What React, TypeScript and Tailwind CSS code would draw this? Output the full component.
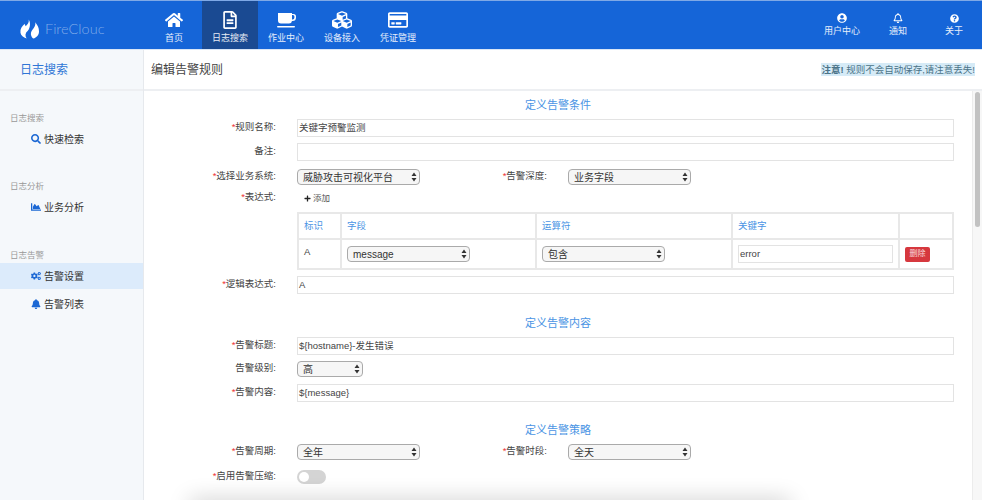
import type { ReactNode } from "react";
import {
  FaBell,
  FaChartArea,
  FaCogs,
  FaCubes,
  FaHome,
  FaPlus,
  FaQuestionCircle,
  FaRegBell,
  FaRegCreditCard,
  FaRegFileAlt,
  FaSearch,
  FaUserCircle,
} from "react-icons/fa";

function Logo() {
  return (
    <svg width="19" height="20" viewBox="0 0 20 20" fill="#fff">
      <path d="M9 0C10 3 8 5 6 7 5.500 6 5 5.500 5 4.500 2 7 0 10 .5 14 1 17 3.500 19 7 20 5 17 5.500 14 8 12 9.500 10.500 10.500 8 10.500 5 10.500 3 10 1 9 0z" />
      <path d="M16 3C16.500 5 16 7 14.500 9 13 11 11 13 11.500 16 12 18 13 19.500 14 20 17.500 19 20 16 20 12.500 20 9 18.500 6 16 3z" />
    </svg>
  );
}

function CupIcon() {
  return (
    <svg width="19" height="17" viewBox="0 0 19 17" fill="#fff">
      <path d="M1 1h14v1h1.500A2.500 2.500 0 0 1 19 4.500v1A3.500 3.500 0 0 1 15.500 9H15a3 3 0 0 1-3 2.500H4A3 3 0 0 1 1 8.500z" />
      <path d="M15 3v4.500h.6A1.800 1.800 0 0 0 17.400 5.700V4.500A1.500 1.500 0 0 0 15.900 3z" fill="#1565d8" />
      <rect x="0" y="14" width="18" height="1.600" rx=".8" />
    </svg>
  );
}

function NavItem({ icon, label, active }: { icon: ReactNode; label: string; active?: boolean }) {
  return (
    <div className={`flex w-[56px] flex-col items-center pt-[9px] ${active ? "bg-[#1a4a92]" : ""}`}>
      <div className="flex h-[20px] items-center text-white">{icon}</div>
      <div className="mt-[1px] text-[9px] leading-[14px] text-white/90">{label}</div>
    </div>
  );
}

function RightItem({ icon, label }: { icon: ReactNode; label: string }) {
  return (
    <div className="flex w-[56px] flex-col items-center pt-[11px]">
      <div className="flex h-[12px] items-center text-white">{icon}</div>
      <div className="text-[9px] leading-[14px] text-white/90">{label}</div>
    </div>
  );
}

function SideGroup({ title, children, mt }: { title: string; children: ReactNode; mt: string }) {
  return (
    <div className={mt}>
      <div className="pl-[10px] text-[8.500px] leading-[12px] text-[#999]">{title}</div>
      {children}
    </div>
  );
}

function SideItem({ icon, label, active }: { icon: ReactNode; label: string; active?: boolean }) {
  return (
    <div className={`mt-[2px] flex h-[26px] items-center gap-[3px] pl-[31px] ${active ? "bg-[#dcebfb]" : ""}`}>
      <span className="flex w-[10px] justify-center text-[#1c68d4]">{icon}</span>
      <span className="text-[10px] text-[#333]">{label}</span>
    </div>
  );
}

function Label({ text, required, w = "w-[132px]" }: { text: string; required?: boolean; w?: string }) {
  return (
    <div className={`shrink-0 pb-[2px] text-right text-[9.500px] leading-[12px] text-[#444] ${w}`}>
      {required && <span className="text-[#e33]">*</span>}
      {text}:
    </div>
  );
}

function Input({ value, className = "w-full" }: { value?: string; className?: string }) {
  return (
    <div className={`flex h-[18px] items-center border border-[#e3e3e3] bg-white pl-[1px] text-[9.500px] text-[#444] ${className}`}>
      {value}
    </div>
  );
}

function Select({ value, w }: { value: string; w: string }) {
  return (
    <div className={`flex h-[16px] items-center justify-between rounded-[4px] border border-[#aaa] bg-[#f6f6f6] pl-[5px] pr-[2px] text-[10px] text-[#333] ${w}`}>
      <span>{value}</span>
      <svg width="6" height="10" viewBox="0 0 6 10" fill="#333">
        <path d="M3 0.500 5.500 4H.5zM3 9.500.5 6h5z" />
      </svg>
    </div>
  );
}

function SectionTitle({ text, mt }: { text: string; mt: string }) {
  return <div className={`pl-[18px] text-center text-[11px] leading-[14px] text-[#4a94e4] ${mt}`}>{text}</div>;
}

function Row({ children, mt }: { children: ReactNode; mt: string }) {
  return <div className={`flex items-center gap-[21px] ${mt}`}>{children}</div>;
}

export default function App() {
  return (
    <div className="relative flex h-[500px] w-[982px] flex-col overflow-hidden bg-white font-['Liberation_Sans','Noto_Sans_CJK_SC',sans-serif]">
      <header className="flex h-[50px] shrink-0 border-t border-b border-t-[#7fa9e6] border-b-[#d9e6f7] bg-[#1565d8]">
        <div className="flex w-[146px] items-center gap-[6px] pl-[20px] pt-[8px]">
          <Logo />
          <span className="font-['Lato'] text-[14.500px] font-light text-white/45">FireClouc</span>
        </div>
        <NavItem icon={<FaHome size={18} />} label="首页" />
        <NavItem icon={<FaRegFileAlt size={18} />} label="日志搜索" active />
        <NavItem icon={<CupIcon />} label="作业中心" />
        <NavItem icon={<FaCubes size={20} />} label="设备接入" />
        <NavItem icon={<FaRegCreditCard size={20} />} label="凭证管理" />
        <div className="ml-auto flex">
          <RightItem icon={<FaUserCircle size={10} />} label="用户中心" />
          <RightItem icon={<FaRegBell size={10} />} label="通知" />
          <RightItem icon={<FaQuestionCircle size={9} />} label="关于" />
        </div>
      </header>

      <div className="flex min-h-0 flex-1">
        <aside className="w-[144px] shrink-0 border-r border-[#e6e9ed] bg-[#f5f8fb]">
          <div className="flex h-[41px] items-center border-b-2 border-[#edeff2] pl-[20px] text-[12px] text-[#2f76d6]">
            日志搜索
          </div>
          <SideGroup title="日志搜索" mt="mt-[21px]">
            <SideItem icon={<FaSearch size={10} />} label="快速检索" />
          </SideGroup>
          <SideGroup title="日志分析" mt="mt-[28px]">
            <SideItem icon={<FaChartArea size={12} />} label="业务分析" />
          </SideGroup>
          <SideGroup title="日志告警" mt="mt-[29px]">
            <SideItem icon={<FaCogs size={12} />} label="告警设置" active />
            <SideItem icon={<FaBell size={10} />} label="告警列表" />
          </SideGroup>
        </aside>

        <main className="flex min-w-0 flex-1 flex-col">
          <div className="flex h-[41px] shrink-0 items-center justify-between border-b-2 border-[#edeff2] pl-[7px] pr-[7px]">
            <span className="text-[12px] text-[#444]">编辑告警规则</span>
            <span className="bg-[#d6ebf7] text-[9.500px] leading-[13px] text-[#4b7388]">
              <b>注意!</b> 规则不会自动保存,请注意丢失!
            </span>
          </div>

          <div className="flex min-h-0 flex-1">
            <div className="min-w-0 flex-1 pr-[18px]">
              <SectionTitle text="定义告警条件" mt="mt-[7px]" />
              <Row mt="mt-[7px]">
                <Label text="规则名称" required />
                <Input value="关键字预警监测" />
              </Row>
              <Row mt="mt-[6px]">
                <Label text="备注" />
                <Input />
              </Row>
              <Row mt="mt-[8px]">
                <Label text="选择业务系统" required />
                <Select value="威胁攻击可视化平台" w="w-[123px]" />
                <Label text="告警深度" required w="w-[106px]" />
                <Select value="业务字段" w="w-[123px]" />
              </Row>
              <Row mt="mt-[6px]">
                <Label text="表达式" required />
                <div className="flex items-center gap-[2px] pl-[7px] text-[8.500px] leading-[14px] text-[#555]">
                  <FaPlus size={7} className="text-[#222]" />
                  添加
                </div>
              </Row>
              <div className="mt-[7px] pl-[153px]">
                <table className="w-full table-fixed border-collapse text-[9.500px]">
                  <thead>
                    <tr className="h-[26px] text-left text-[#4a94e4]">
                      <th className="w-[43px] border-2 border-[#e8e8e8] pl-[5px] font-normal">标识</th>
                      <th className="w-[195px] border-2 border-[#e8e8e8] pl-[5px] font-normal">字段</th>
                      <th className="w-[196px] border-2 border-[#e8e8e8] pl-[5px] font-normal">运算符</th>
                      <th className="w-[167px] border-2 border-[#e8e8e8] pl-[5px] font-normal">关键字</th>
                      <th className="border-2 border-[#e8e8e8]" />
                    </tr>
                  </thead>
                  <tbody>
                    <tr className="h-[30px] text-[#444]">
                      <td className="border-2 border-[#e8e8e8] pb-[3px] pl-[5px] align-middle">A</td>
                      <td className="border-2 border-[#e8e8e8] pl-[5px]">
                        <Select value="message" w="w-[123px]" />
                      </td>
                      <td className="border-2 border-[#e8e8e8] pl-[5px]">
                        <Select value="包含" w="w-[123px]" />
                      </td>
                      <td className="border-2 border-[#e8e8e8] pl-[5px]">
                        <Input value="error" className="w-[155px]" />
                      </td>
                      <td className="border-2 border-[#e8e8e8] pl-[5px]">
                        <div className="flex h-[15px] w-[25px] items-center justify-center rounded-[2px] bg-[#d6383e] text-[8px] text-white/80">
                          删除
                        </div>
                      </td>
                    </tr>
                  </tbody>
                </table>
              </div>
              <Row mt="mt-[6px]">
                <Label text="逻辑表达式" required />
                <Input value="A" />
              </Row>

              <SectionTitle text="定义告警内容" mt="mt-[22px]" />
              <Row mt="mt-[7px]">
                <Label text="告警标题" required />
                <Input value="${hostname}-发生错误" />
              </Row>
              <Row mt="mt-[6px]">
                <Label text="告警级别" />
                <Select value="高" w="w-[66px]" />
              </Row>
              <Row mt="mt-[7px]">
                <Label text="告警内容" required />
                <Input value="${message}" />
              </Row>

              <SectionTitle text="定义告警策略" mt="mt-[21px]" />
              <Row mt="mt-[7px]">
                <Label text="告警周期" required />
                <Select value="全年" w="w-[123px]" />
                <Label text="告警时段" required w="w-[106px]" />
                <Select value="全天" w="w-[123px]" />
              </Row>
              <Row mt="mt-[10px]">
                <Label text="启用告警压缩" required />
                <div className="flex h-[14px] w-[29px] items-center rounded-full bg-[#d4d4d4] pl-[2px]">
                  <div className="size-[10px] rounded-full bg-white" />
                </div>
              </Row>
            </div>
            <div className="w-[10px] shrink-0 border-l border-[#ececec] bg-[#f7f7f7] px-[2px] pt-[1px]">
              <div className="h-[135px] rounded-full bg-[#c2c2c2]" />
            </div>
          </div>
        </main>
      </div>
      {/* faint shadow of a dialog just below the fold */}
      <div className="pointer-events-none absolute bottom-[-14px] left-[190px] h-[14px] w-[600px] shadow-[0_0_22px_rgba(0,0,0,0.22)]" />
    </div>
  );
}
